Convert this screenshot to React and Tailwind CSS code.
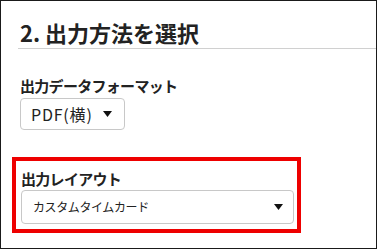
export default function App() {
  const font = { fontFamily: '"Noto Sans CJK JP", "Noto Sans", sans-serif' };

  return (
    <div className="w-[380px] h-[250px] bg-white" style={font}>
      <div className="w-[377px] h-[249px] border border-[#1a1a1a] bg-white pt-[16px]">
        <div className="ml-[17px] border-b border-[#d0d0d0] pb-[1px]">
          <h2 className="pl-[2px] text-[22px] font-bold leading-[30px] text-[#222]">
            2. 出力方法を選択
          </h2>
        </div>

        <div className="pl-[19px] pt-[26px]">
          <p className="text-[15px] font-bold leading-[22px] tracking-[-0.7px] text-[#222]">
            出力データフォーマット
          </p>
          <div className="mt-[1px] flex h-[32px] w-[105px] items-center justify-between rounded-[4px] border border-[#c8c8c8] pl-[10px] pr-[12px]">
            <span className="text-[16px] tracking-[0.8px] text-[#222]">PDF(横)</span>
            <Caret />
          </div>
        </div>

        <div className="ml-[11px] mt-[27px] w-[289px] border-4 border-[#ee0000] pb-[5px] pl-[5px] pr-[3px] pt-[7px]">
          <p className="text-[15px] font-bold leading-[22px] tracking-[-0.7px] text-[#222]">
            出力レイアウト
          </p>
          <div className="flex h-[34px] items-center justify-between rounded-[4px] border border-[#c8c8c8] pl-[11px] pr-[10px]">
            <span className="text-[12px] tracking-[-0.4px] text-[#222]">カスタムタイムカード</span>
            <Caret />
          </div>
        </div>
      </div>
    </div>
  );
}

function Caret() {
  return (
    <svg width="9" height="6" viewBox="0 0 9 6" className="shrink-0">
      <path d="M0 0 L9 0 L4.5 6 Z" fill="#111" />
    </svg>
  );
}
